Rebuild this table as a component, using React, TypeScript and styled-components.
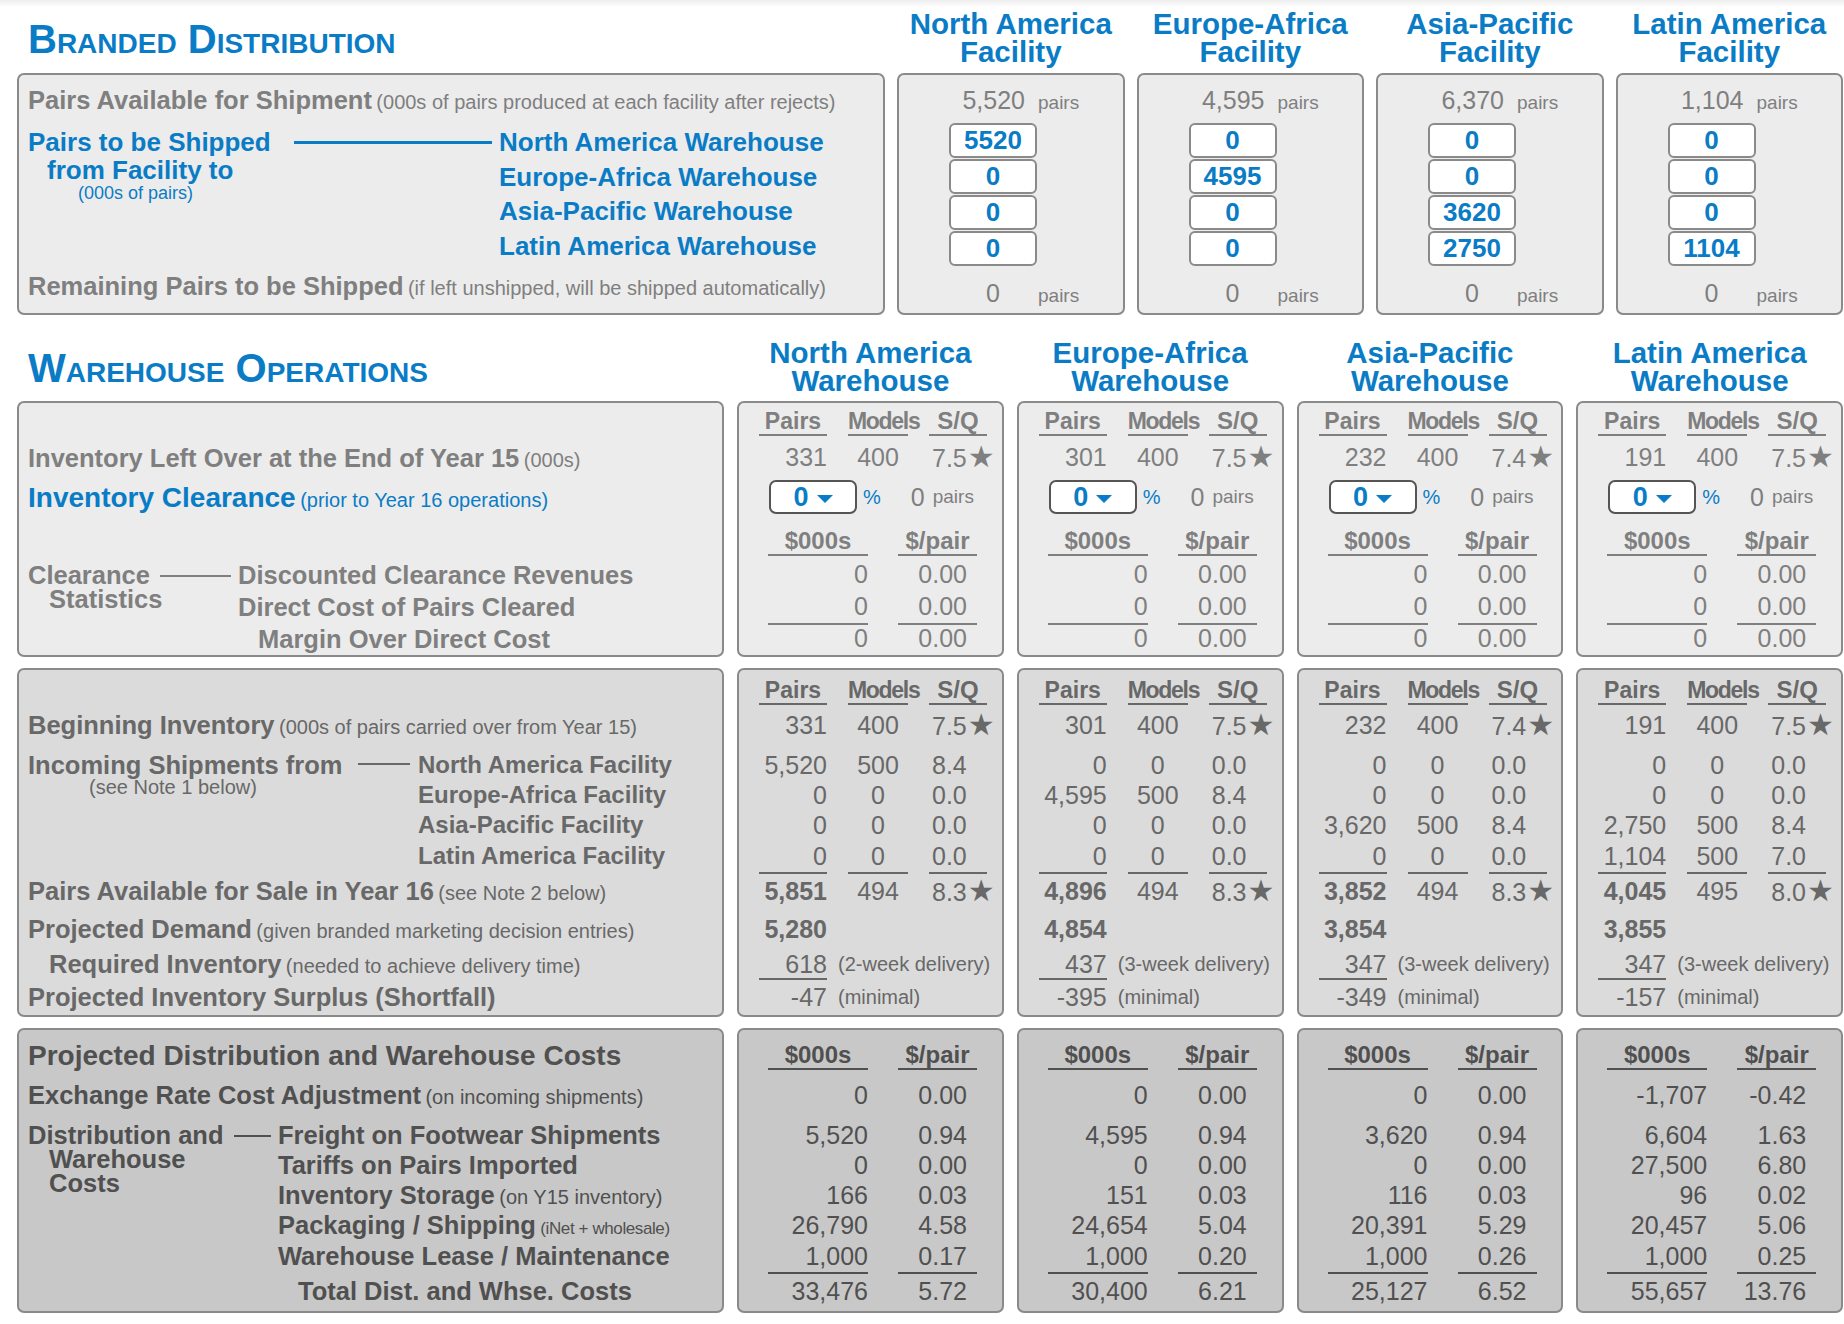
import styled, { createGlobalStyle } from "styled-components";

const BLUE = "#0a7cc6";

type Tone = "a" | "b" | "c";
const tones: Record<Tone, { bg: string; fg: string }> = {
  a: { bg: "#ececec", fg: "#7f7f7f" },
  b: { bg: "#dbdbdb", fg: "#686868" },
  c: { bg: "#c8c8c8", fg: "#505050" },
};

const GlobalStyle = createGlobalStyle`
  * { box-sizing: border-box; }
  html, body { margin: 0; padding: 0; background: #fff; }
  body {
    font-family: "Liberation Sans", Arial, Helvetica, sans-serif;
    color: #7f7f7f;
  }
`;

const Page = styled.div`
  width: 1844px;
  padding: 10px 1px 10px 17px;
  background: linear-gradient(180deg, #ededed 0, #fff 7px);
`;

const Grid = styled.div<{ $left: number; $gap: number; $mt?: number }>`
  display: grid;
  grid-template-columns: ${(p) => p.$left}px repeat(4, 1fr);
  column-gap: ${(p) => p.$gap}px;
  margin-top: ${(p) => p.$mt ?? 0}px;
`;

const SectionTitle = styled.h1`
  align-self: end;
  margin: 0 0 8px 11px;
  font-size: 40px;
  line-height: 38px;
  font-weight: 700;
  font-variant: small-caps;
  color: ${BLUE};
  white-space: nowrap;
`;

const ColHeading = styled.div`
  align-self: end;
  text-align: center;
  font-size: 29.5px;
  line-height: 28px;
  font-weight: 700;
  color: ${BLUE};
  white-space: nowrap;
`;

const Panel = styled.div<{ $tone: Tone }>`
  background: ${(p) => tones[p.$tone].bg};
  color: ${(p) => tones[p.$tone].fg};
  border: 2px solid #8a8a8a;
  border-radius: 7px;
  overflow: hidden;
`;

const LeftPanel = styled(Panel)<{ $pt?: number; $pb?: number }>`
  padding: ${(p) => p.$pt ?? 0}px 0 ${(p) => p.$pb ?? 0}px 9px;
`;

/* ---------- text pieces ---------- */

const Label = styled.span<{ $blue?: boolean; $size?: number }>`
  font-weight: 700;
  font-size: ${(p) => p.$size ?? 25.5}px;
  color: ${(p) => (p.$blue ? BLUE : "inherit")};
`;

const Paren = styled.span<{ $blue?: boolean; $size?: number; $tight?: boolean }>`
  font-weight: 400;
  font-size: ${(p) => p.$size ?? 20}px;
  color: ${(p) => (p.$blue ? BLUE : "inherit")};
  letter-spacing: ${(p) => (p.$tight ? "-0.4px" : "0")};
`;

const LRow = styled.div<{ $h: number; $indent?: number; $mt?: number; $pt?: number }>`
  height: ${(p) => p.$h}px;
  line-height: ${(p) => p.$h - (p.$pt ?? 0)}px;
  padding-top: ${(p) => p.$pt ?? 0}px;
  padding-left: ${(p) => p.$indent ?? 0}px;
  margin-top: ${(p) => p.$mt ?? 0}px;
  white-space: nowrap;
`;

const Gap = styled.div<{ $h: number }>`
  height: ${(p) => p.$h}px;
`;

/* bracket: a label on the left, a rule, then a list of items */
const Bracket = styled.div<{ $mt?: number }>`
  display: flex;
  align-items: flex-start;
  margin-top: ${(p) => p.$mt ?? 0}px;
`;

const BracketLabel = styled.div<{ $w: number }>`
  width: ${(p) => p.$w}px;
  flex: none;
  white-space: nowrap;
`;

const Connector = styled.div<{ $w: number; $ml: number; $mt: number; $blue?: boolean; $t?: number }>`
  flex: none;
  width: ${(p) => p.$w}px;
  height: ${(p) => p.$t ?? 2}px;
  margin-left: ${(p) => p.$ml}px;
  margin-top: ${(p) => p.$mt}px;
  background: ${(p) => (p.$blue ? BLUE : "currentColor")};
`;

const BracketList = styled.div<{ $ml: number }>`
  margin-left: ${(p) => p.$ml}px;
  display: flex;
  flex-direction: column;
`;

/* ---------- facility column (top) ---------- */

const FacPanel = styled(Panel)`
  padding-top: 10px;
`;

const FacRow = styled.div<{ $mt?: number }>`
  display: flex;
  align-items: baseline;
  height: 30px;
  line-height: 30px;
  margin-top: ${(p) => p.$mt ?? 0}px;
  white-space: nowrap;
`;

const FacNum = styled.span<{ $w: number; $ml?: number; $align: "right" | "center" }>`
  display: inline-block;
  width: ${(p) => p.$w}px;
  margin-left: ${(p) => p.$ml ?? 0}px;
  text-align: ${(p) => p.$align};
  font-size: 25px;
`;

const Unit = styled.span<{ $ml: number }>`
  margin-left: ${(p) => p.$ml}px;
  font-size: 19px;
`;

const InputStack = styled.div`
  display: flex;
  flex-direction: column;
  gap: 1px;
  margin: 8px 0 0 50px;
  width: 88px;
`;

const ShipInput = styled.input`
  width: 88px;
  height: 35px;
  padding: 0;
  border: 2px solid #8a8a8a;
  border-radius: 6px;
  background: #fff;
  font: 700 26px "Liberation Sans", Arial, sans-serif;
  color: ${BLUE};
  text-align: center;
  outline: none;
`;

/* ---------- warehouse columns ---------- */

const Row3 = styled.div<{ $h: number }>`
  display: grid;
  grid-template-columns: 68px 60px 58px;
  column-gap: 21px;
  padding-left: 20px;
  height: ${(p) => p.$h}px;
  line-height: ${(p) => p.$h}px;
  font-size: 25px;
  white-space: nowrap;
`;

const Row2 = styled(Row3)`
  grid-template-columns: 100px 79px;
  column-gap: 30px;
  padding-left: 29px;
`;

const HeadRow3 = styled(Row3)<{ $pt: number }>`
  padding-top: ${(p) => p.$pt}px;
  align-items: start;
`;

const HeadRow2 = styled(Row2)<{ $pt: number }>`
  padding-top: ${(p) => p.$pt}px;
  align-items: start;
`;

const HeadCell = styled.div<{ $squeeze?: boolean; $size?: number }>`
  height: 28px;
  line-height: 26px;
  font-weight: 700;
  font-size: ${(p) => p.$size ?? 23}px;
  text-align: center;
  letter-spacing: ${(p) => (p.$squeeze ? "-1.3px" : "0")};
  border-bottom: 2px solid currentColor;
  overflow: visible;
`;

const Cell = styled.div<{
  $align?: "left" | "right" | "center";
  $bold?: boolean;
  $rule?: boolean;
  $pr?: number;
  $pl?: number;
}>`
  text-align: ${(p) => p.$align ?? "right"};
  font-weight: ${(p) => (p.$bold ? 700 : 400)};
  border-bottom: ${(p) => (p.$rule ? "2px solid currentColor" : "0")};
  padding-right: ${(p) => p.$pr ?? 0}px;
  padding-left: ${(p) => p.$pl ?? 0}px;
`;

const Star = styled.span`
  font-family: "DejaVu Sans", sans-serif;
  font-size: 30px;
  margin-left: 1px;
`;

const NoteRow = styled.div<{ $h: number }>`
  display: flex;
  align-items: stretch;
  padding-left: 20px;
  height: ${(p) => p.$h}px;
  line-height: ${(p) => p.$h}px;
  font-size: 25px;
  white-space: nowrap;
`;

const NoteCell = styled(Cell)`
  width: 68px;
  flex: none;
`;

const Note = styled.span`
  margin-left: 11px;
  font-size: 20px;
`;

const ClearRow = styled.div`
  display: flex;
  align-items: center;
  height: 44px;
  padding-left: 30px;
  white-space: nowrap;
`;

const Dropdown = styled.div`
  width: 88px;
  height: 34px;
  display: flex;
  align-items: center;
  justify-content: center;
  background: #fff;
  border: 2px solid #555;
  border-radius: 7px;
  font-weight: 700;
  font-size: 27px;
  color: ${BLUE};
`;

const Caret = styled.span`
  width: 0;
  height: 0;
  margin: 4px 0 0 8px;
  border-left: 8px solid transparent;
  border-right: 8px solid transparent;
  border-top: 8px solid ${BLUE};
`;

const Percent = styled.span`
  margin-left: 6px;
  font-size: 20px;
  color: ${BLUE};
`;

const ClearPairs = styled.span`
  margin-left: 30px;
  font-size: 25px;
`;

/* ---------- data ---------- */

const facilities = [
  { name: "North America", avail: "5,520", ship: ["5520", "0", "0", "0"] },
  { name: "Europe-Africa", avail: "4,595", ship: ["0", "4595", "0", "0"] },
  { name: "Asia-Pacific", avail: "6,370", ship: ["0", "0", "3620", "2750"] },
  { name: "Latin America", avail: "1,104", ship: ["0", "0", "0", "1104"] },
];

type Trip = [string, string, string];
type Pair = [string, string];

interface Warehouse {
  name: string;
  left: Trip;
  incoming: Trip[];
  avail: Trip;
  demand: string;
  required: string;
  delivery: string;
  surplus: string;
  exchange: Pair;
  costs: Pair[];
  total: Pair;
}

const warehouses: Warehouse[] = [
  {
    name: "North America",
    left: ["331", "400", "7.5"],
    incoming: [
      ["5,520", "500", "8.4"],
      ["0", "0", "0.0"],
      ["0", "0", "0.0"],
      ["0", "0", "0.0"],
    ],
    avail: ["5,851", "494", "8.3"],
    demand: "5,280",
    required: "618",
    delivery: "(2-week delivery)",
    surplus: "-47",
    exchange: ["0", "0.00"],
    costs: [
      ["5,520", "0.94"],
      ["0", "0.00"],
      ["166", "0.03"],
      ["26,790", "4.58"],
      ["1,000", "0.17"],
    ],
    total: ["33,476", "5.72"],
  },
  {
    name: "Europe-Africa",
    left: ["301", "400", "7.5"],
    incoming: [
      ["0", "0", "0.0"],
      ["4,595", "500", "8.4"],
      ["0", "0", "0.0"],
      ["0", "0", "0.0"],
    ],
    avail: ["4,896", "494", "8.3"],
    demand: "4,854",
    required: "437",
    delivery: "(3-week delivery)",
    surplus: "-395",
    exchange: ["0", "0.00"],
    costs: [
      ["4,595", "0.94"],
      ["0", "0.00"],
      ["151", "0.03"],
      ["24,654", "5.04"],
      ["1,000", "0.20"],
    ],
    total: ["30,400", "6.21"],
  },
  {
    name: "Asia-Pacific",
    left: ["232", "400", "7.4"],
    incoming: [
      ["0", "0", "0.0"],
      ["0", "0", "0.0"],
      ["3,620", "500", "8.4"],
      ["0", "0", "0.0"],
    ],
    avail: ["3,852", "494", "8.3"],
    demand: "3,854",
    required: "347",
    delivery: "(3-week delivery)",
    surplus: "-349",
    exchange: ["0", "0.00"],
    costs: [
      ["3,620", "0.94"],
      ["0", "0.00"],
      ["116", "0.03"],
      ["20,391", "5.29"],
      ["1,000", "0.26"],
    ],
    total: ["25,127", "6.52"],
  },
  {
    name: "Latin America",
    left: ["191", "400", "7.5"],
    incoming: [
      ["0", "0", "0.0"],
      ["0", "0", "0.0"],
      ["2,750", "500", "8.4"],
      ["1,104", "500", "7.0"],
    ],
    avail: ["4,045", "495", "8.0"],
    demand: "3,855",
    required: "347",
    delivery: "(3-week delivery)",
    surplus: "-157",
    exchange: ["-1,707", "-0.42"],
    costs: [
      ["6,604", "1.63"],
      ["27,500", "6.80"],
      ["96", "0.02"],
      ["20,457", "5.06"],
      ["1,000", "0.25"],
    ],
    total: ["55,657", "13.76"],
  },
];

const warehouseNames = [
  "North America Warehouse",
  "Europe-Africa Warehouse",
  "Asia-Pacific Warehouse",
  "Latin America Warehouse",
];

const facilityNames = [
  "North America Facility",
  "Europe-Africa Facility",
  "Asia-Pacific Facility",
  "Latin America Facility",
];

/* ---------- small builders ---------- */

function PMS({ pt }: { pt: number }) {
  return (
    <HeadRow3 $h={pt + 31} $pt={pt}>
      <HeadCell>Pairs</HeadCell>
      <HeadCell $squeeze>Models</HeadCell>
      <HeadCell $size={24}>S/Q</HeadCell>
    </HeadRow3>
  );
}

function Dollars({ h, pt }: { h: number; pt: number }) {
  return (
    <HeadRow2 $h={h} $pt={pt}>
      <HeadCell $size={24}>$000s</HeadCell>
      <HeadCell $size={24}>$/pair</HeadCell>
    </HeadRow2>
  );
}

function TripRow({ v, h, star, boldFirst, rule }: { v: Trip; h: number; star?: boolean; boldFirst?: boolean; rule?: boolean }) {
  return (
    <Row3 $h={h}>
      <Cell $bold={boldFirst} $rule={rule}>
        {v[0]}
      </Cell>
      <Cell $align="center" $rule={rule}>
        {v[1]}
      </Cell>
      <Cell $align="left" $pl={3} $rule={rule}>
        {v[2]}
        {star && <Star>★</Star>}
      </Cell>
    </Row3>
  );
}

function PairRow({ v, h, rule }: { v: Pair; h: number; rule?: boolean }) {
  return (
    <Row2 $h={h}>
      <Cell $rule={rule}>{v[0]}</Cell>
      <Cell $rule={rule} $pr={10}>
        {v[1]}
      </Cell>
    </Row2>
  );
}

export default function App() {
  return (
    <>
      <GlobalStyle />
      <Page>
        {/* ===== Branded Distribution ===== */}
        <Grid $left={868} $gap={12}>
          <SectionTitle>Branded Distribution</SectionTitle>
          {facilities.map((f) => (
            <ColHeading key={f.name}>
              {f.name}
              <br />
              Facility
            </ColHeading>
          ))}
        </Grid>

        <Grid $left={868} $gap={12} $mt={7}>
          <LeftPanel $tone="a" $pt={10} $pb={12}>
            <LRow $h={30}>
              <Label>Pairs Available for Shipment</Label>{" "}
              <Paren>(000s of pairs produced at each facility after rejects)</Paren>
            </LRow>
            <Bracket $mt={10}>
              <BracketLabel $w={266}>
                <LRow $h={34}>
                  <Label $blue $size={26}>
                    Pairs to be Shipped
                  </Label>
                </LRow>
                <LRow $h={24} $indent={19} $mt={-1}>
                  <Label $blue $size={26}>
                    from Facility to
                  </Label>
                </LRow>
                <LRow $h={22} $indent={50}>
                  <Paren $blue $size={18}>
                    (000s of pairs)
                  </Paren>
                </LRow>
              </BracketLabel>
              <Connector $w={198} $ml={0} $mt={16} $t={3} $blue />
              <BracketList $ml={7}>
                {warehouseNames.map((n) => (
                  <LRow key={n} $h={34.5}>
                    <Label $blue $size={26}>
                      {n}
                    </Label>
                  </LRow>
                ))}
              </BracketList>
            </Bracket>
            <LRow $h={30} $mt={8}>
              <Label>Remaining Pairs to be Shipped</Label>{" "}
              <Paren>(if left unshipped, will be shipped automatically)</Paren>
            </LRow>
          </LeftPanel>

          {facilities.map((f) => (
            <FacPanel $tone="a" key={f.name}>
              <FacRow>
                <FacNum $w={126} $align="right">
                  {f.avail}
                </FacNum>
                <Unit $ml={13}>pairs</Unit>
              </FacRow>
              <InputStack>
                {f.ship.map((s, i) => (
                  <ShipInput key={i} value={s} readOnly />
                ))}
              </InputStack>
              <FacRow $mt={12}>
                <FacNum $w={88} $ml={50} $align="center">
                  0
                </FacNum>
                <Unit $ml={1}>pairs</Unit>
              </FacRow>
            </FacPanel>
          ))}
        </Grid>

        {/* ===== Warehouse Operations ===== */}
        <Grid $left={707} $gap={13} $mt={24}>
          <SectionTitle>Warehouse Operations</SectionTitle>
          {warehouses.map((w) => (
            <ColHeading key={w.name}>
              {w.name}
              <br />
              Warehouse
            </ColHeading>
          ))}
        </Grid>

        {/* --- clearance --- */}
        <Grid $left={707} $gap={13} $mt={6}>
          <LeftPanel $tone="a">
            <Gap $h={37} />
            <LRow $h={36}>
              <Label>Inventory Left Over at the End of Year 15</Label> <Paren>(000s)</Paren>
            </LRow>
            <LRow $h={44}>
              <Label $blue $size={28}>
                Inventory Clearance
              </Label>{" "}
              <Paren $blue>(prior to Year 16 operations)</Paren>
            </LRow>
            <Gap $h={40} />
            <Bracket>
              <BracketLabel $w={131}>
                <LRow $h={31}>
                  <Label>Clearance</Label>
                </LRow>
                <LRow $h={24} $indent={21} $mt={-4}>
                  <Label>Statistics</Label>
                </LRow>
              </BracketLabel>
              <Connector $w={71} $ml={1} $mt={15} />
              <BracketList $ml={7}>
                <LRow $h={31}>
                  <Label>Discounted Clearance Revenues</Label>
                </LRow>
                <LRow $h={33}>
                  <Label>Direct Cost of Pairs Cleared</Label>
                </LRow>
                <LRow $h={31} $indent={20}>
                  <Label>Margin Over Direct Cost</Label>
                </LRow>
              </BracketList>
            </Bracket>
          </LeftPanel>

          {warehouses.map((w) => (
            <Panel $tone="a" key={w.name}>
              <PMS pt={5} />
              <TripRow v={w.left} h={36} star />
              <ClearRow>
                <Dropdown>
                  0<Caret />
                </Dropdown>
                <Percent>%</Percent>
                <ClearPairs>0</ClearPairs>
                <Unit $ml={8}>pairs</Unit>
              </ClearRow>
              <Dollars h={40} pt={9} />
              <PairRow v={["0", "0.00"]} h={31} />
              <PairRow v={["0", "0.00"]} h={33} rule />
              <PairRow v={["0", "0.00"]} h={31} />
            </Panel>
          ))}
        </Grid>

        {/* --- inventory --- */}
        <Grid $left={707} $gap={13} $mt={11}>
          <LeftPanel $tone="b">
            <Gap $h={38} />
            <LRow $h={34}>
              <Label>Beginning Inventory</Label> <Paren>(000s of pairs carried over from Year 15)</Paren>
            </LRow>
            <Gap $h={8} />
            <Bracket>
              <BracketLabel $w={322}>
                <LRow $h={30}>
                  <Label>Incoming Shipments from</Label>
                </LRow>
                <LRow $h={22} $indent={61} $mt={-4}>
                  <Paren>(see Note 1 below)</Paren>
                </LRow>
              </BracketLabel>
              <Connector $w={52} $ml={8} $mt={13} />
              <BracketList $ml={8}>
                {facilityNames.map((n, i) => (
                  <LRow key={n} $h={i === 3 ? 32 : 30}>
                    <Label $size={24}>{n}</Label>
                  </LRow>
                ))}
              </BracketList>
            </Bracket>
            <LRow $h={38}>
              <Label>Pairs Available for Sale in Year 16</Label> <Paren>(see Note 2 below)</Paren>
            </LRow>
            <LRow $h={38}>
              <Label>Projected Demand</Label> <Paren>(given branded marketing decision entries)</Paren>
            </LRow>
            <LRow $h={32} $indent={21}>
              <Label>Required Inventory</Label> <Paren>(needed to achieve delivery time)</Paren>
            </LRow>
            <LRow $h={35}>
              <Label>Projected Inventory Surplus (Shortfall)</Label>
            </LRow>
          </LeftPanel>

          {warehouses.map((w) => (
            <Panel $tone="b" key={w.name}>
              <PMS pt={7} />
              <TripRow v={w.left} h={34} star />
              <Gap $h={8} />
              {w.incoming.map((t, i) => (
                <TripRow key={i} v={t} h={i === 3 ? 32 : 30} rule={i === 3} />
              ))}
              <TripRow v={w.avail} h={38} star boldFirst />
              <NoteRow $h={38}>
                <NoteCell $bold>{w.demand}</NoteCell>
              </NoteRow>
              <NoteRow $h={32}>
                <NoteCell $rule>{w.required}</NoteCell>
                <Note>{w.delivery}</Note>
              </NoteRow>
              <NoteRow $h={35}>
                <NoteCell>{w.surplus}</NoteCell>
                <Note>(minimal)</Note>
              </NoteRow>
            </Panel>
          ))}
        </Grid>

        {/* --- costs --- */}
        <Grid $left={707} $gap={13} $mt={11}>
          <LeftPanel $tone="c">
            <LRow $h={46} $pt={6}>
              <Label $size={28}>Projected Distribution and Warehouse Costs</Label>
            </LRow>
            <LRow $h={38}>
              <Label>Exchange Rate Cost Adjustment</Label> <Paren>(on incoming shipments)</Paren>
            </LRow>
            <Gap $h={6} />
            <Bracket>
              <BracketLabel $w={201}>
                <LRow $h={30}>
                  <Label>Distribution and</Label>
                </LRow>
                <LRow $h={24} $indent={21} $mt={-3}>
                  <Label>Warehouse</Label>
                </LRow>
                <LRow $h={24} $indent={21}>
                  <Label>Costs</Label>
                </LRow>
              </BracketLabel>
              <Connector $w={37} $ml={5} $mt={15} />
              <BracketList $ml={7}>
                <LRow $h={30}>
                  <Label>Freight on Footwear Shipments</Label>
                </LRow>
                <LRow $h={30}>
                  <Label>Tariffs on Pairs Imported</Label>
                </LRow>
                <LRow $h={30}>
                  <Label>Inventory Storage</Label> <Paren>(on Y15 inventory)</Paren>
                </LRow>
                <LRow $h={30}>
                  <Label>Packaging / Shipping</Label>{" "}
                  <Paren $size={17} $tight>
                    (iNet + wholesale)
                  </Paren>
                </LRow>
                <LRow $h={32}>
                  <Label>Warehouse Lease / Maintenance</Label>
                </LRow>
                <LRow $h={39} $indent={20}>
                  <Label>Total Dist. and Whse. Costs</Label>
                </LRow>
              </BracketList>
            </Bracket>
          </LeftPanel>

          {warehouses.map((w) => (
            <Panel $tone="c" key={w.name}>
              <Dollars h={46} pt={12} />
              <PairRow v={w.exchange} h={38} />
              <Gap $h={6} />
              {w.costs.map((c, i) => (
                <PairRow key={i} v={c} h={i === 4 ? 32 : 30} rule={i === 4} />
              ))}
              <PairRow v={w.total} h={39} />
            </Panel>
          ))}
        </Grid>
      </Page>
    </>
  );
}
